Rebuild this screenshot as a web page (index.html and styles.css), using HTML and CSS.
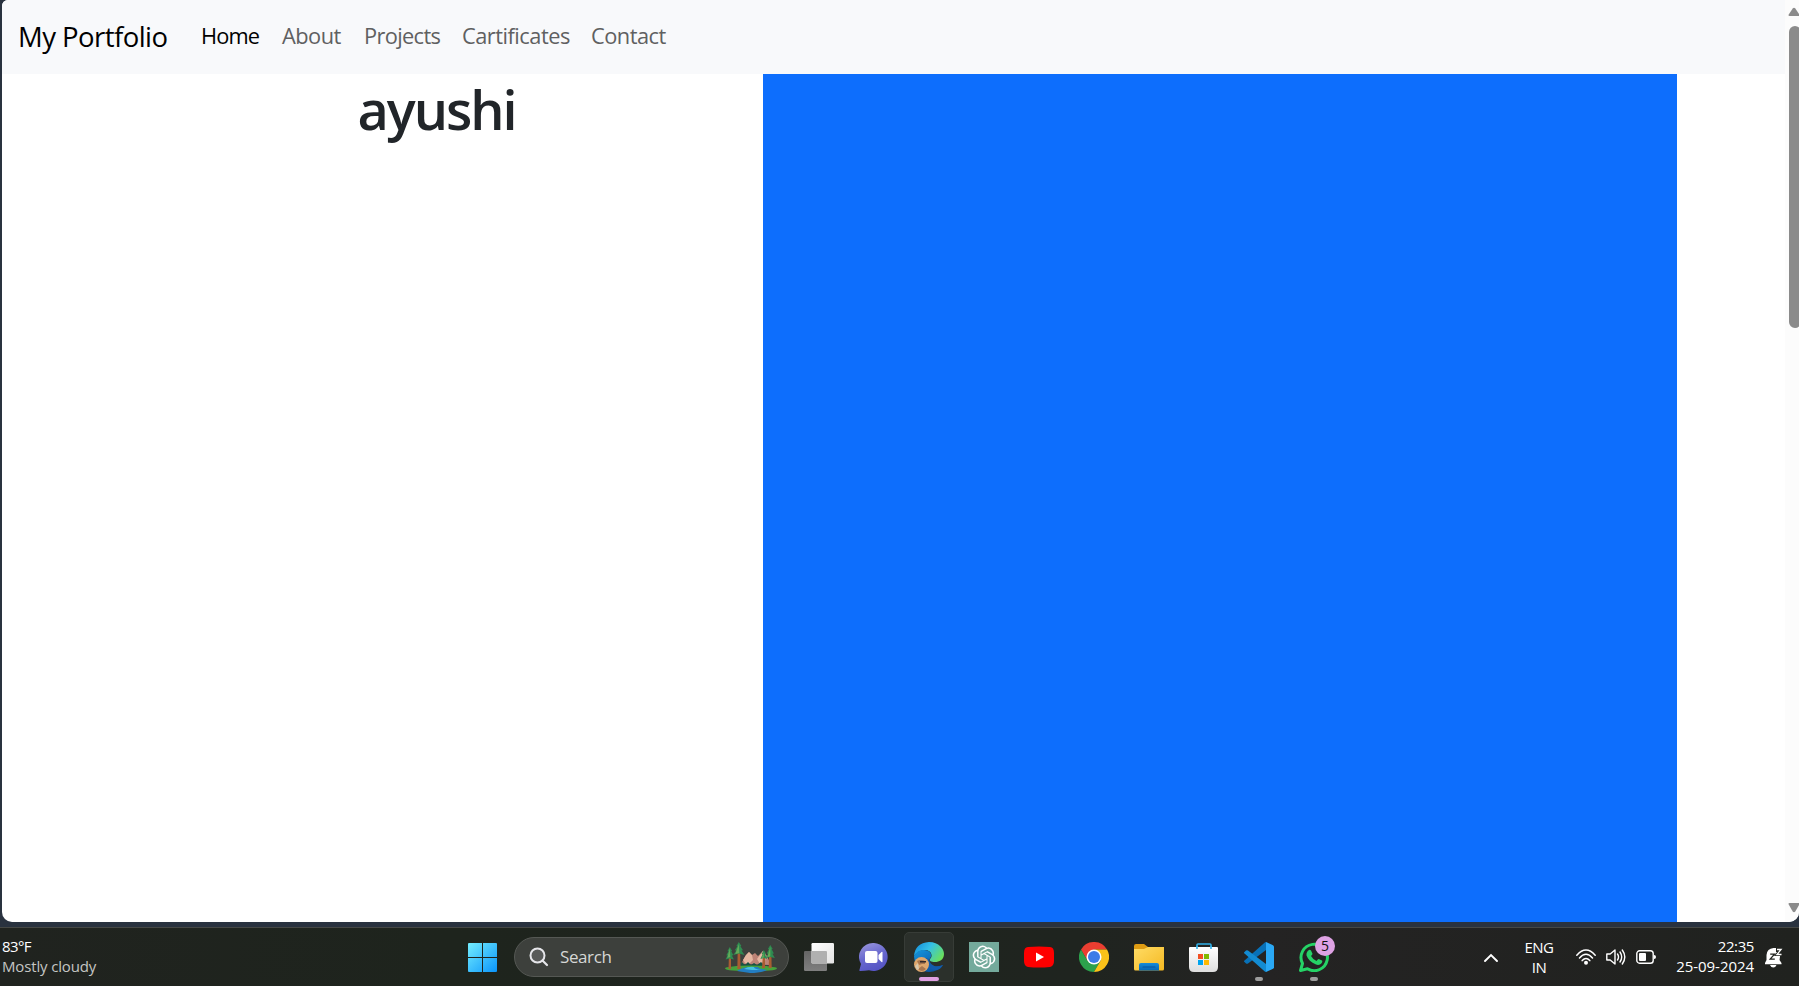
FILE: index.html
```html
<!DOCTYPE html>
<html lang="en">
<head>
<meta charset="utf-8">
<title>My Portfolio</title>
<link rel="stylesheet" href="styles.css">
</head>
<body>
<div class="window">
  <div class="page">
    <nav class="navbar">
      <a class="brand">My Portfolio</a>
      <a class="link active home">Home</a>
      <a class="link about">About</a>
      <a class="link projects">Projects</a>
      <a class="link certs">Cartificates</a>
      <a class="link contact">Contact</a>
    </nav>
    <main class="row">
      <h1 class="name"><span>ayushi</span></h1>
      <div class="panel"></div>
    </main>
  </div>
  <div class="scrollbar">
    <svg class="arrow" width="12" height="10" viewBox="0 0 12 10"><path d="M1.5 9h9q1.500 0 .8-1.500L7.300 1.500Q6 0 4.700 1.500L.7 7.500Q0 9 1.500 9z" fill="#8b8b8b"/></svg>
    <div class="thumb"></div>
    <svg class="arrow" width="12" height="10" viewBox="0 0 12 10"><path d="M1.500 0h9q1.500 0 .8 1.500L7.300 8.500Q6 10 4.700 8.500L.7 1.500Q0 0 1.500 0z" fill="#8b8b8b"/></svg>
  </div>
</div>
<footer class="taskbar">
  <div class="weather"><span class="temp">83°F</span><span class="sky">Mostly cloudy</span></div>
  <svg class="start" width="29" height="29" viewBox="0 0 29 29">
    <defs><linearGradient id="win" gradientUnits="userSpaceOnUse" x1="0" y1="0" x2="29" y2="29"><stop offset="0" stop-color="#74eefe"/><stop offset="1" stop-color="#0a94fb"/></linearGradient></defs>
    <path d="M0 1q0-1 1-1h13v14H0zM15 0h13q1 0 1 1v13H15zM0 15h14v14H1q-1 0-1-1zM15 15h14v13q0 1-1 1H15z" fill="url(#win)"/>
  </svg>
  <div class="search">
    <svg width="20" height="20" viewBox="0 0 20 20"><circle cx="8.500" cy="8.500" r="7" fill="#585a59" stroke="#e6e6ea" stroke-width="2"/><path d="M13.500 13.500l4.500 4.500" stroke="#e6e6ea" stroke-width="2.200" stroke-linecap="round"/></svg>
    <span class="hint">Search</span>
    <svg class="scene" width="53" height="31" viewBox="0 0 53 31">
      <path d="M16 22l5-9 3-3 3 3 3-2 3 3 5-5 4 5 4 9z" fill="#bd8376"/>
      <path d="M24 10l3 3 1 5-4 4-4-1-2-3 3-5zM38 9l3 5-1 5-5 3-3-5z" fill="#e5b6a1"/>
      <path d="M14 25l3-5 3 3 3-3 3 3 3-2 3 2 4-3 4 4v3H14z" fill="#155245"/>
      <ellipse cx="26" cy="26.500" rx="26" ry="3" fill="#48a13b"/>
      <path d="M12 29q6-4 13-4h8q1 2 9 3-6 3-17 3z" fill="#237ec2"/>
      <path d="M19 27q5-3 10-2 0 2 7 3h-9z" fill="#45c1df"/>
      <g fill="#a95d32"><path d="M4 11h2v16H3.500zM12.800 5H15l.6 22h-3.300zM38 12h2v14h-3zM44.300 8h2l.4 18h-3z"/></g>
      <path d="M4.800 5l2.400 4-1 .2 2.200 4-1.500.2 2 4-4.200-1-4.200 1 2-4-1.200-.2 2.200-4-1-.2zM13.800 0l2.600 4-1 .2 2.600 4-1.500.2 3 4.600-5.600-1.400L8.300 13l3-4.600-1.500-.2 2.600-4-1-.2zM38.800 8l2.200 4-1 .2 2.200 4.800-3.400-1-3.400 1 2.200-4.800-1-.2zM45.300 3l2.400 4-1 .2 2.200 4.300-1.500.2 2.500 4.300-4.600-1-4.600 1 2.500-4.300-1.500-.2 2.200-4.300-1-.2z" fill="#2f8a50"/>
      <path d="M4.800 6l.5 9-3 1zM13.800 2l.5 9-4 1zM45.300 5v9.500l-3 .5zM38.800 10v5.500l-2 .5z" fill="#64aa59"/>
    </svg>
  </div>
  <div class="apps">
    <div class="app"><svg width="30" height="30" viewBox="0 0 30 30">
      <defs><linearGradient id="tv" x2="1" y2="1"><stop offset="0" stop-color="#fff"/><stop offset="1" stop-color="#e3e3e3"/></linearGradient><linearGradient id="tg" x2="0" y2="1"><stop offset="0" stop-color="#656565"/><stop offset="1" stop-color="#7f7f7f"/></linearGradient></defs>
      <rect x="0" y="9" width="23" height="20" rx="1.200" fill="url(#tg)"/><rect x="7.500" y="1" width="22.500" height="20.500" rx="1.200" fill="url(#tv)"/><path d="M7.500 9H22q1 0 1 1v11.500H8.500q-1 0-1-1z" fill="#b0b0b0"/></svg></div>
    <div class="app"><svg width="30" height="30" viewBox="0 0 30 30">
      <defs><linearGradient id="ch" x1=".2" y1="0" x2=".6" y2="1"><stop offset="0" stop-color="#9794dc"/><stop offset=".5" stop-color="#6868ce"/><stop offset="1" stop-color="#5554c4"/></linearGradient></defs>
      <path d="M15 1a14 14 0 1 1-5 27.200Q6 29 1 29q-1-.3-.5-1.300L2 22A14 14 0 0 1 15 1z" fill="url(#ch)"/><rect x="6" y="9" width="12.500" height="12" rx="2" fill="#fff"/><path d="M19.500 13l3-3q1-.5 1 .5v9q0 1-1 .5l-3-3z" fill="#fff"/></svg></div>
    <div class="app current"><svg width="30" height="30" viewBox="0 0 30 30">
      <defs><linearGradient id="eg" x1="0" y1=".2" x2="1" y2=".7"><stop offset="0" stop-color="#1590dc"/><stop offset=".45" stop-color="#35c1e6"/><stop offset="1" stop-color="#6de155"/></linearGradient><linearGradient id="eb" x2=".8" y2="1"><stop offset="0" stop-color="#1597df"/><stop offset="1" stop-color="#0b4c9b"/></linearGradient></defs>
      <path d="M0 14Q1 1 15 0c10 0 15 7 15 12 0 6-5 8-9 8-4 0-6-1-5-3 3-2 2-9-5-9Q4 8 0 14z" fill="url(#eg)"/>
      <path d="M0 14Q4 7 10 8c6 0 8 4 7 7-3 3-5 14 12 8Q24 30 15 30 1 29 0 14z" fill="url(#eb)"/>
      <path d="M12 16c-2 6 2 13 11 12q4-1 6-5c-6 3-13 1-14-6z" fill="#115cac"/>
      <circle cx="7.500" cy="22.500" r="7.500" fill="#dfa76c"/><path d="M3 19q4-2 8 0v3H8l-3 1zM4 27l4-3 4 3q-4 4-8 0z" fill="#a8764f"/><path d="M6 19h6v1.500H6z" fill="#33292a"/><path d="M1 24l3-3 1 6-2 1z" fill="#d7c8ae"/></svg><i class="mark"></i></div>
    <div class="app"><svg width="30" height="30" viewBox="0 0 30 30"><path d="M0 0h30v30H0z" fill="#74aa9c"/>
      <g transform="translate(3.600 3.600) scale(.95)" fill="#fff"><path d="M22.282 9.821a5.985 5.985 0 0 0-.516-4.910 6.046 6.046 0 0 0-6.510-2.900A6.065 6.065 0 0 0 4.981 4.182a5.985 5.985 0 0 0-3.998 2.900 6.046 6.046 0 0 0 .743 7.097 5.980 5.980 0 0 0 .511 4.911 6.051 6.051 0 0 0 6.515 2.900A5.985 5.985 0 0 0 13.260 24a6.056 6.056 0 0 0 5.772-4.206 5.990 5.990 0 0 0 3.998-2.900 6.056 6.056 0 0 0-.748-7.073zM13.260 22.430a4.476 4.476 0 0 1-2.876-1.041l.141-.08 4.779-2.758a.795.795 0 0 0 .392-.681v-6.737l2.020 1.169a.071.071 0 0 1 .038.052v5.583a4.504 4.504 0 0 1-4.494 4.493zM3.600 18.304a4.471 4.471 0 0 1-.535-3.014l.142.085 4.783 2.759a.771.771 0 0 0 .780 0l5.843-3.369v2.332a.080.080 0 0 1-.033.062L9.740 19.950a4.500 4.500 0 0 1-6.140-1.646zM2.341 7.896a4.485 4.485 0 0 1 2.366-1.973V11.600a.766.766 0 0 0 .388.677l5.815 3.354-2.020 1.169a.076.076 0 0 1-.071 0l-4.830-2.787A4.504 4.504 0 0 1 2.341 7.872zm16.596 3.856l-5.833-3.388L15.119 7.200a.076.076 0 0 1 .071 0l4.830 2.791a4.494 4.494 0 0 1-.676 8.105v-5.678a.790.790 0 0 0-.407-.666zm2.011-3.023l-.142-.085-4.774-2.782a.776.776 0 0 0-.785 0L9.409 9.230V6.897a.066.066 0 0 1 .028-.062l4.830-2.786a4.500 4.500 0 0 1 6.680 4.660zM8.307 12.863l-2.020-1.164a.080.080 0 0 1-.038-.057V6.074a4.500 4.500 0 0 1 7.376-3.453l-.142.080L8.704 5.459a.795.795 0 0 0-.393.681zm1.097-2.366l2.602-1.500 2.607 1.500v2.999l-2.597 1.500-2.607-1.500z"/></g></svg></div>
    <div class="app"><svg width="30" height="30" viewBox="0 0 30 30"><path d="M4 5q11-1 22 0 4 0 4 6v8q0 5-4 6-11 1-22 0-4-1-4-6v-8q0-6 4-6z" fill="#f00"/><path d="M12 10.500l8 4.500-8 4.500z" fill="#fff"/></svg></div>
    <div class="app"><svg width="30" height="30" viewBox="0 0 30 30"><path d="M2 7.500A15 15 0 0 1 28 7.500H15L8.500 19z" fill="#ea3e31"/><path d="M2 7.500A15 15 0 0 0 15 30l6.500-11.300h-13z" fill="#2ca14c"/><path d="M28 7.500A15 15 0 0 1 15 30l6.500-11.300Q23 12 15 7.500z" fill="#fbc219"/><circle cx="15" cy="15" r="7.500" fill="#fff"/><circle cx="15" cy="15" r="6" fill="#3c7ce7"/></svg></div>
    <div class="app"><svg width="30" height="30" viewBox="0 0 30 30">
      <defs><linearGradient id="fo" x2="1" y2="1"><stop offset="0" stop-color="#ffdc65"/><stop offset="1" stop-color="#f5b922"/></linearGradient><linearGradient id="fb" x2="0" y2="1"><stop offset="0" stop-color="#178bd8"/><stop offset="1" stop-color="#0667b5"/></linearGradient></defs>
      <path d="M0 4q0-2 2-2h8l4 3h14q2 0 2 2v8H0z" fill="#df9c13"/><path d="M0 7h10l4-2h16v22q0 1.500-1.500 1.500h-27Q0 28.500 0 27z" fill="url(#fo)"/><path d="M5 28.500V23q0-2 2-2h16q2 0 2 2v5.500z" fill="url(#fb)"/><path d="M9 25h12" stroke="#0755a0" stroke-width="1.200" stroke-linecap="round"/></svg></div>
    <div class="app"><svg width="30" height="30" viewBox="0 0 30 30">
      <defs><linearGradient id="st" x2="0" y2="1"><stop offset="0" stop-color="#fff"/><stop offset="1" stop-color="#dedede"/></linearGradient></defs>
      <path d="M8 8V3q0-1 1-1h12q1 0 1 1v5" fill="none" stroke="#31b1e9" stroke-width="1.600"/><path d="M1 5h27q1 0 1 1v19q0 5-5 5H5q-5 0-5-5V6q0-1 1-1z" fill="url(#st)"/><path d="M8 4v3M22 4v3" stroke="#31b1e9" stroke-width="1.600"/><path d="M9 12h5v5H9z" fill="#f25022"/><path d="M15 12h5v5h-5z" fill="#7fba00"/><path d="M9 18h5v5H9z" fill="#00a4ef"/><path d="M15 18h5v5h-5z" fill="#ffb900"/></svg></div>
    <div class="app"><svg width="30" height="30" viewBox="0 0 30 30"><path d="M0 19.500l2 2q1 .7 2 0L22 8V0q-1 0-1.500.7L.5 18.500q-.7.500-.5 1z" fill="#0871b8"/><path d="M0 10.500l2-2q1-.7 2 0L22 22v8q-1 0-1.500-.7L.5 11.500q-.7-.5-.5-1z" fill="#138bd2"/><path d="M22 0l7 3.200q1 .6 1 1.500v20.600q0 1-1 1.500L22 30z" fill="#2aa8f5"/></svg><i class="dot"></i></div>
    <div class="app"><svg width="30" height="30" viewBox="0 0 30 30"><path d="M1.500 28.500l2-7A13.200 13.200 0 1 1 8.500 26.800z" fill="none" stroke="#25d366" stroke-width="3" stroke-linejoin="round"/><path d="M10 8q1-.5 2 .5l1.500 3.300q0 .7-1.500 2.200 2 3.500 5.500 5 1.500-2 2.200-2l3.300 1.500q.7.500 0 2c-1 2-3.500 3-6 2-5-2-8-5-9.500-9Q7 10 10 8z" fill="#25d366"/></svg><i class="dot"></i><b class="badge">5</b></div>
  </div>
  <div class="tray">
    <svg class="chev" width="14" height="9" viewBox="0 0 14 9"><path d="M1 8l6-6 6 6" fill="none" stroke="#fff" stroke-width="1.900" stroke-linecap="round"/></svg>
    <div class="lang"><span>ENG</span><span>IN</span></div>
    <div class="status">
      <svg width="20" height="16" viewBox="0 0 20 16"><g fill="none" stroke="#fff" stroke-width="1.500" stroke-linecap="round"><path d="M.8 6.200q9.200-10.400 18.400 0M3.500 9q6.500-7.500 13 0M6.200 11.600q3.800-4.200 7.600 0"/></g><circle cx="10" cy="13.700" r="2" fill="#fff"/></svg>
      <svg width="20" height="18" viewBox="0 0 20 18"><g fill="none" stroke="#fff" stroke-width="1.400" stroke-linecap="round" stroke-linejoin="round"><path d="M.8 6h3.400L9 2v14l-4.800-4H.8zM11.500 6q2 3 0 6M14 4q3.400 5 0 10M16.300 2q5 7 0 14"/></g></svg>
      <svg width="20" height="14" viewBox="0 0 20 14"><rect x=".8" y=".8" width="16.400" height="12.400" rx="2.800" fill="none" stroke="#fff" stroke-width="1.400"/><rect x="3" y="3" width="7" height="8" rx="1" fill="#fff"/><path d="M18 5q2 0 2 2t-2 2z" fill="#fff"/></svg>
    </div>
    <div class="clock"><span class="time">22:35</span><span class="date">25-09-2024</span></div>
    <svg class="bell" width="18" height="21" viewBox="0 0 18 21"><path d="M0 16l1.500-3V8q.5-6.500 7-7H11v4h4v4.500l-.5 3.500 2 3v1.200H0zM5 18h6.500q-1 2.500-3.200 2.500T5 18z" fill="#fff"/><path d="M5.200 7.200h4.300l-4.300 5h4.600" fill="none" stroke="#20231f" stroke-width="1.300"/><path d="M12 2.500h4l-4 5h4.500" fill="none" stroke="#20231f" stroke-width="3"/><path d="M12 2.500h4l-4 5h4.500" fill="none" stroke="#fff" stroke-width="1.400"/></svg>
  </div>
</footer>
</body>
</html>
```
FILE: styles.css
```css
* { box-sizing: border-box; }
body { margin: 0; width: 1799px; height: 986px; overflow: hidden; display: flex; flex-direction: column; background: #29323f; font-family: "Open Sans", "Noto Sans", sans-serif; }
.window { height: 922px; margin-left: 2px; display: flex; background: #fff; border-radius: 6px 0 10px 10px; overflow: hidden; }
.page { width: 1783px; display: flex; flex-direction: column; }
.navbar { height: 74px; padding-left: 16px; background: #f8f9fb; display: flex; align-items: center; white-space: nowrap; }
.brand { width: 183px; font-size: 27.5px; line-height: 42px; letter-spacing: -0.55px; color: #000; }
.link { font-size: 21.8px; line-height: 34px; letter-spacing: -0.5px; color: #5f6061; padding-bottom: 2px; }
.active { color: #000; }
.home { width: 81px; letter-spacing: -0.9px; }
.about { width: 82px; }
.projects { width: 98px; letter-spacing: -0.65px; }
.certs { width: 129px; }
.row { flex: 1; margin: 0 108px; display: grid; grid-template-columns: 653px 914px; }
.name { margin: 0; text-align: center; font-size: 54px; line-height: 70px; font-weight: 600; letter-spacing: -2px; color: #212529; }
.panel { background: #0d6efd; }
.scrollbar { width: 14px; padding: 7px 0 9px 3px; background: #fcfcfc; display: flex; flex-direction: column; flex: none; }
.arrow { flex: none; }
.thumb { width: 12px; height: 302px; margin: 9px 0 auto 1px; border-radius: 6px; background: #8b8b8b; }
.taskbar { height: 59px; margin-top: 5px; border-top: 1px solid #464845; display: flex; align-items: center; background: linear-gradient(90deg, #20231f 0, #1e241d 25%, #1f241f 60%, #242323 70%, #20221f 100%); color: #fff; font-size: 15px; line-height: 20px; white-space: nowrap; }
.weather { width: 468px; padding: 0 0 2px 2px; display: flex; flex-direction: column; }
.weather span, .lang span, .clock span { display: block; }
.temp { letter-spacing: -0.6px; }
.sky { color: #c5c6c4; letter-spacing: -0.15px; }
.start { flex: none; }
.search { width: 275px; height: 40px; margin-left: 17px; padding: 0 10px 0 14px; display: flex; align-items: center; border: 1px solid #555854; border-radius: 20px; background: #3d403c; flex: none; }
.hint { margin-left: 11px; font-size: 17px; color: #d6d7d5; letter-spacing: -0.4px; }
.scene { margin-left: auto; }
.apps { margin-left: 2px; display: flex; flex: none; }
.app { position: relative; width: 50px; height: 50px; margin-right: 5px; display: grid; place-items: center; border-radius: 5px; }
.apps .app:first-child { margin-left: 3px; }
.current { background: #2b302b; border: 1px solid #373c37; }
.mark, .dot { position: absolute; bottom: 1px; left: 50%; transform: translateX(-50%); height: 4px; border-radius: 2px; }
.mark { width: 20px; bottom: 0; background: #e0a0e3; }
.dot { width: 8px; background: #9d9d9d; }
.badge { position: absolute; left: 26px; top: 4px; width: 20px; height: 20px; border-radius: 50%; background: #dea2e4; color: #111; font-size: 14px; line-height: 20px; font-weight: 400; text-align: center; }
.tray { flex: 1; display: flex; align-items: center; }
.chev { margin-left: 140px; }
.lang { width: 30px; margin-left: 26px; padding-bottom: 1px; text-align: center; letter-spacing: -0.5px; }
.status { margin-left: 22px; display: flex; gap: 10px; align-items: center; }
.clock { width: 98px; padding-bottom: 2px; text-align: right; }
.time { letter-spacing: -0.4px; }
.date { letter-spacing: -0.05px; }
.bell { margin-left: 11px; }
```
